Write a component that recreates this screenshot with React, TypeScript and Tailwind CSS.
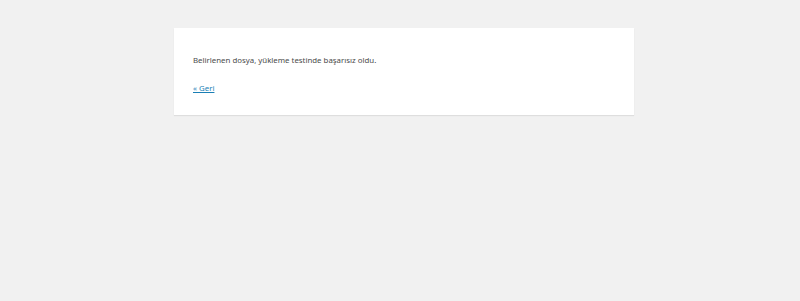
export default function App() {
  return (
    <main className="min-h-screen bg-[#f1f1f1] pt-[28px] font-['Noto_Sans',sans-serif]">
      <div className="mx-auto w-[460px] translate-x-[4px] bg-white px-[19px] pt-[26px] pb-[21px] shadow-[0_1px_1px_rgba(0,0,0,0.08)]">
        <p className="text-[7.85px] leading-[12px] text-[#4a4a4a]">
          Belirlenen dosya, yükleme testinde başarısız oldu.
        </p>
        <p className="mt-[16px] text-[7.85px] leading-[12px]">
          <a href="#" className="text-[#1a7fb5] underline">
            « Geri
          </a>
        </p>
      </div>
    </main>
  );
}
